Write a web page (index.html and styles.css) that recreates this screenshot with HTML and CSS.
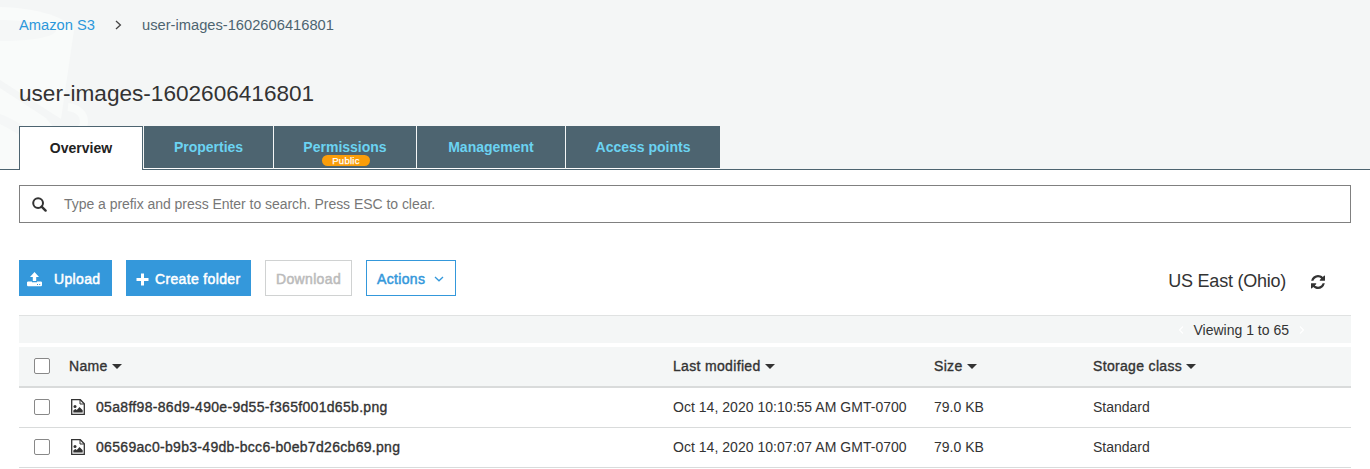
FILE: index.html
```html
<!DOCTYPE html>
<html lang="en">
<head>
<meta charset="utf-8">
<title>S3 Management Console</title>
<link rel="stylesheet" href="styles.css">
</head>
<body>
<header class="header">
  <svg class="bucket" width="100" height="169" viewBox="0 0 100 169" aria-hidden="true">
    <path fill="#f9fbfa" d="M0 7C30 8 64 14 74 30L61 119L0 80Z"/>
    <path fill="#f5f7f7" d="M0 20C25 20 52 24 56 31C51 39 23 41 0 41Z"/>
    <path fill="#f9fbfa" d="M0 88L46 118L56 130L50 169H0Z"/>
    <path fill="#f5f7f7" d="M0 114C12 118 26 128 40 136L36 144C24 138 12 130 0 124Z"/>
    <path fill="none" stroke="#f9fbfa" stroke-width="8" d="M68 107C78 108 84 114 84 122C84 130 72 137 52 134"/>
  </svg>
  <nav class="crumbs">
    <a class="crumb-link">Amazon S3</a>
    <svg class="crumb-sep" width="7" height="10" viewBox="0 0 7 10"><path d="M1 1l4.400 4L1 9" fill="none" stroke="#444" stroke-width="1.300"/></svg>
    <span class="crumb-current">user-images-1602606416801</span>
  </nav>
  <h1 class="title">user-images-1602606416801</h1>
  <div class="tabs">
    <div class="tab tab-active">Overview</div>
    <div class="tab tab-properties">Properties</div>
    <div class="tab tab-permissions">Permissions<span class="badge">Public</span></div>
    <div class="tab tab-management">Management</div>
    <div class="tab tab-access">Access points</div>
  </div>
</header>
<main class="content">
  <div class="search">
    <svg width="15" height="15" viewBox="0 0 15 15"><circle cx="6.100" cy="6.100" r="4.900" fill="none" stroke="#333" stroke-width="2"/><path d="M9.600 9.600l4 4" stroke="#333" stroke-width="2.400" stroke-linecap="round"/></svg>
    <span class="placeholder">Type a prefix and press Enter to search. Press ESC to clear.</span>
  </div>
  <div class="toolbar">
    <div class="button primary upload">
      <svg width="15" height="15" viewBox="0 0 15 15" fill="#fff"><path d="M7.500 0L12 5H9.200v4H5.800V5H3z"/><path fill-rule="evenodd" d="M.8 9.500H5v.8h5v-.8h4.200l.8.8v3.200l-.8.8H.8l-.8-.8v-3.200zM10 12v1h1v-1zm2.200 0v1h1v-1z"/></svg>
      <span>Upload</span>
    </div>
    <div class="button primary create">
      <svg width="13" height="13" viewBox="0 0 13 13"><path d="M6.500.5v12M.5 6.500h12" stroke="#fff" stroke-width="3"/></svg>
      <span>Create folder</span>
    </div>
    <div class="button disabled">Download</div>
    <div class="button actions"><span>Actions</span>
      <svg width="10" height="6" viewBox="0 0 10 6"><path d="M1 1l4 3.800L9 1" fill="none" stroke="#3498db" stroke-width="1.300"/></svg>
    </div>
    <div class="region">US East (Ohio)</div>
    <svg class="refresh" width="14" height="14" viewBox="0 0 1536 1536" fill="#333"><path d="M1511 928q0 5-1 7-64 268-268 434.500T764 1536q-146 0-282.500-55T238 1324l-129 129q-19 19-45 19t-45-19-19-45V960q0-26 19-45t45-19h448q26 0 45 19t19 45-19 45l-137 137q71 66 161 102t187 36q134 0 250-65t186-179q11-17 53-117 8-23 30-23h192q13 0 22.500 9.500t9.500 22.500zm25-800v448q0 26-19 45t-45 19h-448q-26 0-45-19t-19-45 19-45l138-138Q969 256 768 256q-134 0-250 65T332 500q-11 17-53 117-8 23-30 23H50q-13 0-22.500-9.500T18 608v-7q65-268 270-434.500T768 0q146 0 284 55.500T1297 212l130-129q19-19 45-19t45 19 19 45z"/></svg>
  </div>
  <div class="pager">
    <svg width="6" height="8" viewBox="0 0 6 8"><path d="M5 .5L1.500 4 5 7.500" fill="none" stroke="#fff" stroke-width="1.200"/></svg>
    <span class="viewing">Viewing 1 to 65</span>
    <svg width="6" height="8" viewBox="0 0 6 8"><path d="M1 .5L4.500 4 1 7.500" fill="none" stroke="#fff" stroke-width="1.200"/></svg>
  </div>
  <div class="table">
    <div class="row head">
      <div class="check"></div>
      <div class="name">Name<i class="caret"></i></div>
      <div class="modified">Last modified<i class="caret"></i></div>
      <div class="size">Size<i class="caret"></i></div>
      <div class="storage">Storage class<i class="caret"></i></div>
    </div>
    <div class="row">
      <div class="check"></div>
      <div class="name file"><svg class="file-icon" width="14" height="16" viewBox="0 0 14 16"><path d="M.7.7h8.600l4 4v10.600H.7z" fill="#fff" stroke="#333" stroke-width="1.300"/><path d="M9 1v4h4" fill="none" stroke="#333"/><circle cx="4" cy="7.500" r="1.500" fill="#333"/><path d="M2.300 13.500v-2l2-1.500 1.500 1L8.500 8l3.200 3.200v2.300z" fill="#333"/></svg><span>05a8ff98-86d9-490e-9d55-f365f001d65b.png</span></div>
      <div class="modified">Oct 14, 2020 10:10:55 AM GMT-0700</div>
      <div class="size">79.0 KB</div>
      <div class="storage">Standard</div>
    </div>
    <div class="row">
      <div class="check"></div>
      <div class="name file"><svg class="file-icon" width="14" height="16" viewBox="0 0 14 16"><path d="M.7.7h8.600l4 4v10.600H.7z" fill="#fff" stroke="#333" stroke-width="1.300"/><path d="M9 1v4h4" fill="none" stroke="#333"/><circle cx="4" cy="7.500" r="1.500" fill="#333"/><path d="M2.300 13.500v-2l2-1.500 1.500 1L8.500 8l3.200 3.200v2.300z" fill="#333"/></svg><span>06569ac0-b9b3-49db-bcc6-b0eb7d26cb69.png</span></div>
      <div class="modified">Oct 14, 2020 10:07:07 AM GMT-0700</div>
      <div class="size">79.0 KB</div>
      <div class="storage">Standard</div>
    </div>
  </div>
</main>
</body>
</html>
```
FILE: styles.css
```css
* { box-sizing: border-box; }
body { margin: 0; background: #fff; color: #333; font: 14px/20px "Liberation Sans", Arial, sans-serif; overflow: hidden; }
svg { display: block; flex: none; }
.header { position: relative; height: 170px; padding: 15px 19px 0; background: #f4f6f6; border-bottom: 1px solid #4d6470; }
.bucket { position: absolute; left: 0; top: 0; }
.crumbs { position: relative; display: flex; align-items: center; height: 20px; font-size: 14.7px; }
.crumb-link { width: 96px; color: #2c98db; }
.crumb-sep { margin-right: 20px; }
.crumb-current { color: #4d6470; }
.title { position: relative; margin: 43px 0 0; height: 48px; font-size: 22.6px; line-height: 31px; font-weight: 400; }
.tabs { position: relative; display: flex; gap: 1px; height: 44px; width: 701px; border-bottom: 1px solid #4d6470; }
.tab { position: relative; height: 42px; background: #4d6470; color: #6bd3f2; font-weight: 700; line-height: 42px; text-align: center; box-shadow: 0 1px #fff; }
.tab-active { height: 44px; width: 124px; background: #fff; color: #222; border: 1px solid #4d6470; border-bottom: 0; box-shadow: none; }
.tab-properties { width: 129px; }
.tab-permissions { width: 142px; }
.tab-management { width: 148px; }
.tab-access { width: 154px; }
.badge { position: absolute; left: 48px; top: 29px; width: 48px; height: 11px; border-radius: 6px; background: #fa9d0a; color: #fff; font-size: 9.5px; line-height: 12px; font-weight: 400; letter-spacing: .3px; -webkit-text-stroke: .25px #fff; }
.content { padding: 15px 19px 0; }
.search { display: flex; align-items: center; height: 38px; border: 1px solid #808080; padding-left: 12px; color: #777; }
.placeholder { margin-left: 17px; letter-spacing: -.04px; }
.toolbar { display: flex; align-items: center; height: 36px; margin-top: 37px; gap: 14px; }
.button { display: flex; align-items: center; height: 36px; white-space: nowrap; letter-spacing: .35px; -webkit-text-stroke: .5px currentColor; padding-top: 2px; }
.primary { background: #3498db; color: #fff; }
.upload { width: 93px; padding-left: 8px; gap: 12px; }
.create { width: 125px; padding-left: 10px; gap: 6px; }
.disabled { width: 87px; border: 1px solid #d0d2d2; justify-content: center; color: #bbb; }
.actions { width: 90px; border: 1px solid #3498db; padding-left: 10px; gap: 9px; color: #3498db; }
.region { margin-left: auto; font-size: 18px; line-height: 24px; letter-spacing: -.24px; padding-top: 6px; }
.refresh { margin: 8px 26px 0 11px; }
.pager { display: flex; align-items: center; justify-content: flex-end; height: 28px; margin-top: 19px; padding: 1px 46px 0 0; border-top: 1px solid #e0e2e2; background: #f4f6f6; gap: 10px; }
.table { margin-top: 4px; }
.row { display: grid; grid-template-columns: 50px 604px 261px 159px 1fr; align-items: center; height: 40px; padding-bottom: 1px; border-bottom: 1px solid #d9dbdb; }
.head { height: 41px; background: #f4f6f6; border-bottom-width: 2px; letter-spacing: .33px; -webkit-text-stroke: .35px #333; }
.modified { letter-spacing: .03px; }
.head .modified { letter-spacing: .33px; }
.check { width: 16px; height: 16px; margin-left: 15px; border: 1px solid #888; border-radius: 2px; background: #fff; }
.caret { display: inline-block; width: 0; height: 0; margin-left: 4px; border: 5px solid transparent; border-top: 5px solid #333; border-bottom: 0; vertical-align: 2px; }
.file { display: flex; align-items: center; padding-left: 2px; gap: 11px; }
.file span { letter-spacing: .31px; -webkit-text-stroke: .35px #333; }
```
